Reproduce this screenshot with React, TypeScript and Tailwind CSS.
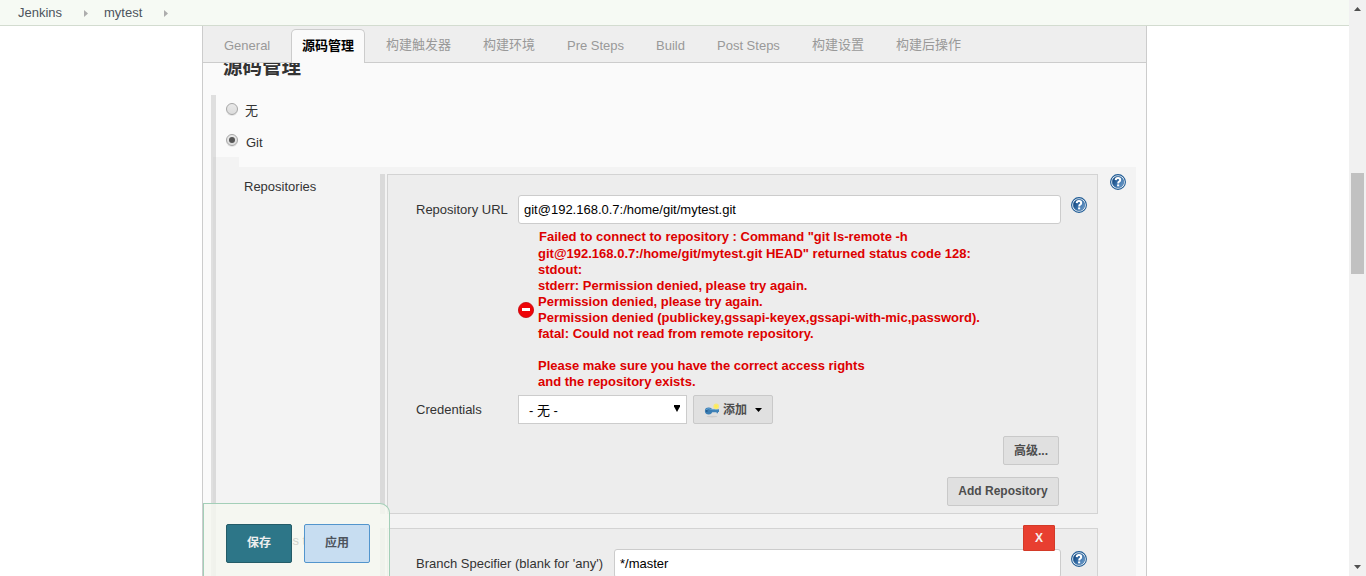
import React from "react";

const tabs = [
  { label: "General", width: "w-[88px] pl-[21px] pt-px" },
  { label: "源码管理", width: "", active: true },
  { label: "构建触发器", width: "ml-[21px] w-[97px]" },
  { label: "构建环境", width: "w-[84px]" },
  { label: "Pre Steps", width: "w-[89px] pt-px" },
  { label: "Build", width: "w-[61px] pt-px" },
  { label: "Post Steps", width: "w-[95px] pt-px" },
  { label: "构建设置", width: "w-[84px]" },
  { label: "构建后操作", width: "w-[107px]" },
];

const errorLines = [
  "git@192.168.0.7:/home/git/mytest.git HEAD\" returned status code 128:",
  "stdout:",
  "stderr: Permission denied, please try again.",
  "Permission denied, please try again.",
  "Permission denied (publickey,gssapi-keyex,gssapi-with-mic,password).",
  "fatal: Could not read from remote repository.",
  "\u00a0",
  "Please make sure you have the correct access rights",
  "and the repository exists.",
];

function Help() {
  return (
    <svg width="16" height="16" viewBox="0 0 16 16" className="block shrink-0">
      <defs>
        <linearGradient id="helpFill" x1="0" y1="0.2" x2="1" y2="0.8">
          <stop offset="0" stopColor="#0f4279" />
          <stop offset="0.5" stopColor="#376fa8" />
          <stop offset="1" stopColor="#6f9dcb" />
        </linearGradient>
      </defs>
      <circle cx="8" cy="8" r="7.4" fill="#fff" stroke="#1d5a94" strokeWidth="1.1" />
      <circle cx="8" cy="8" r="5.8" fill="url(#helpFill)" stroke="#1f5a94" strokeWidth="0.5" />
      <path d="M5.7 6.1 Q5.8 4.1 8 4.1 Q10.2 4.1 10.2 5.9 Q10.2 7 9.1 7.7 Q8.2 8.2 8.2 9.4" fill="none" stroke="#fff" strokeWidth="2" />
      <rect x="7.1" y="10.4" width="2.1" height="1.9" fill="#fff" />
    </svg>
  );
}

function Radio({ checked }: { checked?: boolean }) {
  return (
    <span className="flex h-[12px] w-[12px] shrink-0 items-center justify-center rounded-full border border-[#a6a6a6] bg-gradient-to-b from-[#e9e9e9] to-[#dcdcdc] shadow-[0_1px_0_#e6e6e6]">
      {checked && <span className="h-[6px] w-[6px] rounded-full bg-[#555]" />}
    </span>
  );
}

function Crumb({ label, className }: { label: string; className: string }) {
  return (
    <div className={`flex items-center ${className}`}>
      <span className="flex-1">{label}</span>
      <svg width="4" height="7" viewBox="0 0 4 7" className="mt-[2px]">
        <path d="M0 0 L4 3.5 L0 7 Z" fill="#adadad" />
      </svg>
    </div>
  );
}

function KeyIcon() {
  return (
    <svg width="16" height="16" viewBox="0 0 16 16" className="shrink-0">
      <ellipse cx="8" cy="14.6" rx="5.5" ry="0.8" fill="#cdcdcd" />
      <path d="M6.5 7.2 H15 V10 H14 V11.2 H12.6 V10.2 H6.5 Z" fill="#3f82b8" />
      <ellipse cx="4.6" cy="9" rx="3.7" ry="3.4" fill="#3a7db3" />
      <path d="M2 7.6 Q4.4 5.6 7 7.4 H14.6" stroke="#68a6d6" strokeWidth="0.9" fill="none" />
      <circle cx="2.8" cy="9" r="0.9" fill="#245a8a" />
      <circle cx="12.2" cy="4.4" r="2.8" fill="#f8e77c" />
      <circle cx="12.2" cy="4.4" r="1.4" fill="#fff04a" />
    </svg>
  );
}

const button =
  "flex h-[29px] items-center justify-center rounded-[2px] border border-[#c9c9c9] bg-[#e0e0e0] text-[12px] font-bold text-[#4d4d4d]";

export default function App() {
  return (
    <div className="flex h-[576px] w-[1366px] overflow-hidden bg-white font-['Liberation_Sans','Noto_Sans_CJK_SC',sans-serif] text-[13px] leading-[16px] text-[#333]">
      <div className="flex w-[1349px] flex-col">
        <header className="flex h-[26px] shrink-0 border-b border-[#d3dcd0] bg-[#f6faf4] pl-[18px] text-[#4d545d]">
          <Crumb label="Jenkins" className="w-[70px]" />
          <Crumb label="mytest" className="ml-[16px] w-[64px]" />
        </header>

        <main className="relative ml-[202px] flex h-[550px] w-[945px] flex-col border-x border-[#ccc] bg-[#fafafa]">
          <nav className="z-10 flex h-[37px] shrink-0 items-end border-b border-[#ccc] bg-[#eee] text-[#999]">
            {tabs.map((t) => (
              <div
                key={t.label}
                className={
                  t.active
                    ? "-mb-px flex h-[34px] w-[74px] items-center justify-center rounded-t-[5px] border border-b-0 border-[#ccc] bg-[#fafafa] pb-[2px] font-bold text-black"
                    : `flex h-[34px] shrink-0 items-center whitespace-nowrap ${t.width}`
                }
              >
                {t.label}
              </div>
            ))}
          </nav>

          <div className="flex h-[513px] flex-col overflow-hidden">
            <h2 className="-mt-[10px] ml-[20px] h-[42px] shrink-0 text-[19.5px] font-bold leading-[29px]">源码管理</h2>
            <div className="ml-[8px] flex h-[481px]">
              <div className="w-[2px] bg-[#dfdfdf]" />
              <div className="flex w-[3px] flex-col">
                <div className="h-[62px] bg-[#dfdfdf]" />
                <div className="flex-1 bg-[#dadada]" />
              </div>
              <div className="flex w-[920px] flex-col">
                <div className="flex h-[31px] items-start pl-[10px] pt-[8px]">
                  <Radio />
                  <span className="ml-[7px]">无</span>
                </div>
                <div className="flex h-[31px] items-start pl-[10px] pt-[8px]">
                  <Radio checked />
                  <span className="ml-[8px] mt-px">Git</span>
                </div>
                <div className="h-[10px] w-[23px] bg-[#f3f3f3]" />
                <div className="flex h-[409px] flex-col bg-[#f3f3f3] pt-[7px]">
                  <section className="flex h-[340px] shrink-0">
                    <div className="w-[164px] pl-[28px] pt-[5px]">Repositories</div>
                    <div className="mr-[2px] w-[5px] bg-[#dadada]" />
                    <div className="flex w-[711px] flex-col border border-[#d3d3d3] bg-[#ededed] pl-[28px] pt-[20px]">
                      <div className="flex h-[29px]">
                        <div className="w-[102px] pt-[7px]">Repository URL</div>
                        <div className="flex w-[543px] items-center rounded-[3px] border border-[#ccc] bg-white pl-[5px] text-black">
                          git@192.168.0.7:/home/git/mytest.git
                        </div>
                        <div className="ml-[10px] pt-[2px]"><Help /></div>
                      </div>
                      <div className="ml-[102px] mt-[5px] flex h-[161px] items-center">
                        <svg width="16" height="16" viewBox="0 0 16 16" className="mr-[4px] shrink-0">
                          <circle cx="8" cy="8" r="7.6" fill="#ee0408" stroke="#c4060c" strokeWidth="0.8" />
                          <rect x="4" y="6" width="8" height="3" fill="#fff" />
                        </svg>
                        <div className="whitespace-nowrap font-bold text-[#d00]">
                          <div className="h-[17px] pl-px">Failed to connect to repository : Command "git ls-remote -h</div>
                          {errorLines.map((line, i) => (
                            <div key={i}>{line}</div>
                          ))}
                        </div>
                      </div>
                      <div className="mt-[5px] flex h-[29px]">
                        <div className="w-[102px] pt-[7px]">Credentials</div>
                        <div className="flex w-[169px] justify-between border border-[#ccc] bg-white pl-[10px] pr-[6px] text-black">
                          <span className="pt-[7px]">- 无 -</span>
                          <svg width="6" height="7" viewBox="0 0 6 7" className="mt-[9px]">
                            <path d="M0 0 H6 V1.5 L3 7 L0 1.5 Z" fill="#000" />
                          </svg>
                        </div>
                        <div className={`${button} ml-[6px] w-[80px]`}>
                          <KeyIcon />
                          <span className="ml-[3px] mr-[8px]">添加</span>
                          <svg width="7" height="4" viewBox="0 0 7 4">
                            <path d="M0 0 H7 L3.5 4 Z" fill="#000" />
                          </svg>
                        </div>
                      </div>
                      <div className="mt-[12px] flex w-[643px] flex-col items-end gap-[12px]">
                        <div className={`${button} w-[56px]`}>高级...</div>
                        <div className={`${button} w-[112px] pb-[2px]`}>Add Repository</div>
                      </div>
                    </div>
                    <div className="ml-[12px]"><Help /></div>
                  </section>

                  <section className="mt-[14px] flex h-[60px] shrink-0">
                    <div className="w-[164px] pl-[28px] pt-[5px]">Branches to build</div>
                    <div className="mr-[2px] w-[5px] bg-[#dadada]" />
                    <div className="relative flex w-[711px] border border-[#d3d3d3] bg-[#ededed] pl-[28px] pt-[20px]">
                      <div className="w-[198px] whitespace-nowrap pt-[7px]">Branch Specifier (blank for 'any')</div>
                      <div className="flex h-[29px] w-[447px] items-center rounded-[3px] border border-[#ccc] bg-white pl-[5px] text-black">
                        */master
                      </div>
                      <div className="ml-[10px] pt-[2px]"><Help /></div>
                      <div className="absolute -top-[4px] right-[42px] flex h-[26px] w-[32px] items-center justify-center rounded-[1px] border border-[#d33a28] bg-[#e83f30] text-[12px] font-bold text-[#f6f0ef]">
                        X
                      </div>
                    </div>
                  </section>
                </div>
              </div>
            </div>
          </div>

          <footer className="absolute bottom-0 left-0 z-20 flex h-[73px] w-[187px] rounded-tr-[10px] border border-b-0 border-[#a3cfb8] bg-[#f5f8f0]/80 pl-[22px] pt-[20px] text-[12px] font-bold">
            <div className="flex h-[39px] w-[66px] items-center justify-center rounded-[2px] border border-[#245c68] bg-[#2d7688] pb-[2px] text-[#eee]">保存</div>
            <div className="ml-[12px] flex h-[39px] w-[66px] items-center justify-center rounded-[2px] border border-[#5295cd] bg-[#c7ddf1] pb-[2px] text-[#4d545d]">应用</div>
          </footer>
        </main>
      </div>

      <aside className="flex w-[17px] flex-col items-center bg-[#f1f1f1]">
        <svg width="7" height="4" viewBox="0 0 7 4" className="mt-[7px]">
          <path d="M0 4 L3.5 0 L7 4 Z" fill="#505050" />
        </svg>
        <div className="mt-[162px] h-[101px] w-[13px] bg-[#c1c1c1]" />
        <svg width="7" height="4" viewBox="0 0 7 4" className="mt-[291px]">
          <path d="M0 0 L3.5 4 L7 0 Z" fill="#505050" />
        </svg>
      </aside>
    </div>
  );
}
